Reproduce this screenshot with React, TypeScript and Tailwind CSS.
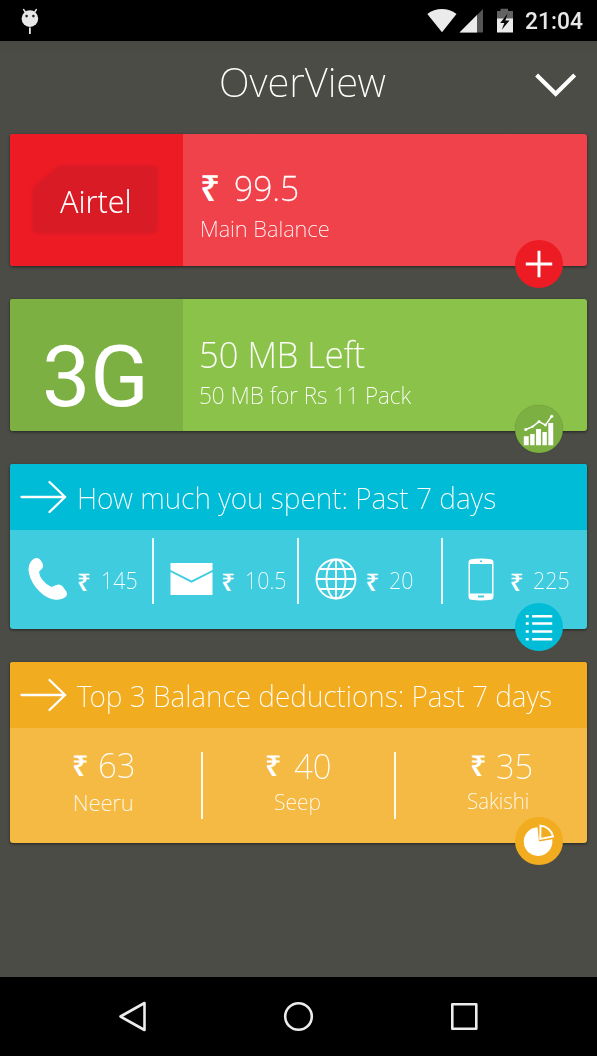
import type { ReactNode } from "react";

const thin = "block w-max origin-left whitespace-nowrap leading-none font-[240]";

function Rupee({ className }: { className: string }) {
  return (
    <span className={`block w-max origin-left whitespace-nowrap leading-none font-[620] ${className}`}>₹</span>
  );
}

function Badge({ className, children }: { className: string; children: ReactNode }) {
  return (
    <button
      className={`absolute right-6 bottom-[-22px] flex size-12 items-center justify-center rounded-full ${className}`}
    >
      <svg width="48" height="48" viewBox="0 0 49 49" fill="none">
        {children}
      </svg>
    </button>
  );
}

function LongArrow() {
  return (
    <svg width="48" height="34" viewBox="0 0 48 34" fill="none" stroke="white" strokeWidth="2.3" strokeLinecap="round">
      <path d="M2.5 17H46M30.5 2L46 17L30.5 32" />
    </svg>
  );
}

function StatusBar() {
  return (
    <div className="flex h-[41px] items-start bg-black">
      <svg className="mt-2 ml-5 shrink-0" width="20" height="28" viewBox="0 0 20 28">
        <path d="M3.6 1.5L6 5M16.4 1.5L14 5" stroke="#e8e8e8" strokeWidth="1.4" strokeLinecap="round" />
        <circle cx="9.9" cy="10.6" r="8.3" fill="#e8e8e8" />
        <circle cx="6.6" cy="8.1" r="1.3" fill="#222" />
        <circle cx="13.4" cy="8.1" r="1.3" fill="#222" />
        <path d="M9.9 19.5V26" stroke="#e8e8e8" strokeWidth="1.8" />
      </svg>
      <svg className="mt-2 ml-[387px] shrink-0" width="88" height="26" viewBox="0 0 88 26">
        <path d="M0.3 6.1C8.5 -0.7 21.3 -0.7 29.5 6.1L15 24.3Z" fill="#ebebeb" />
        <path d="M56 1V24.5H32.5Z" fill="#555" />
        <path d="M50 7V24.5H32.5Z" fill="#ebebeb" />
        <path d="M70 3H73.5V0.7H81V3H86V12H70Z" fill="#626262" />
        <path d="M70 10.5H86V24.5H70Z" fill="#ebebeb" />
        <path d="M80.7 5.5L73.2 15H77.3L74.8 21.8L82.5 12.4H78.4Z" fill="#0a0a0a" />
      </svg>
      <span className="mt-[10px] ml-[10px] block origin-left font-[Roboto] text-[23.5px] leading-none font-medium text-[#e8e8e8] scale-x-[0.97]">21:04</span>
    </div>
  );
}

function Header() {
  return (
    <header className="flex h-[93px] shrink-0 items-start">
      <h1 className={`${thin} mt-[20px] ml-[219px] scale-x-[0.98] text-[41px]`}>OverView</h1>
      <svg className="mt-8 ml-auto mr-5 shrink-0" width="43" height="26" viewBox="0 0 43 26" fill="none">
        <path d="M2.6 2L21.7 20.7L40.7 2" stroke="white" strokeWidth="4.2" />
      </svg>
    </header>
  );
}

const card = "relative flex shrink-0 rounded-[3px] shadow-[0_1px_3px_rgba(0,0,0,0.55)]";

function BalanceCard() {
  return (
    <section className={`${card} h-[132px] bg-[#f0424b]`}>
      <div className="flex w-[173px] items-center rounded-l-[3px] bg-[#ed1b24] pl-[21px]">
        <div className="relative flex h-[72px] w-[128px]">
          <svg className="absolute inset-0 blur-[1px]" width="128" height="72" viewBox="0 0 128 72">
            <path d="M31 1H120Q127 1 127 8V63Q127 70 120 70H8Q1 70 1 63V28Q1 24 4 21L26 3Q28 1 31 1Z" fill="#d91b26" />
          </svg>
          <span className="relative mt-[22px] ml-[29px] block h-max w-max origin-left text-[31px] leading-none font-[340] scale-x-[0.98]">Airtel</span>
        </div>
      </div>
      <div className="pl-[17px] pt-[36px]">
        <div className="flex h-[35px]">
          <Rupee className="w-[18px] text-[35px]" />
          <span className={`${thin} ml-[14px] scale-x-[0.96] text-[35px] [-webkit-text-stroke:0.3px_white]`}>99.5</span>
        </div>
        <span className={`${thin} mt-[13px] scale-x-[0.975] text-[22.5px]`}>Main Balance</span>
      </div>
      <Badge className="bg-[#ed1b24]">
        <path d="M24.5 11V38M11 24.5H38" stroke="white" strokeWidth="3" />
      </Badge>
    </section>
  );
}

function DataCard() {
  return (
    <section className={`${card} mt-[33px] h-[132px] bg-[#8bc34a]`}>
      <div className="flex w-[173px] rounded-l-[3px] bg-[#7cb043]">
        <span className="mt-[35px] ml-[32px] block h-max w-max font-[Roboto] text-[86px] leading-none">3G</span>
      </div>
      <div className="pl-[16px] pt-[38px]">
        <span className={`${thin} scale-x-[0.96] text-[36px] [-webkit-text-stroke:0.2px_white]`}>50 MB Left</span>
        <span className={`${thin} mt-[11px] scale-x-[0.981] text-[23px]`}>50 MB for Rs 11 Pack</span>
      </div>
      <Badge className="bg-[#7cb043] shadow-[0_0_1px_rgba(0,0,0,0.4)]">
        <path d="M9 41V32H14V41ZM15.5 41V29.5H20V41ZM21.5 41V24.5H26.5V41ZM28 41V27.5H32.5V41ZM34 41V18.5H39V41Z" fill="white" />
        <path d="M11 25L18 22L24.5 17L31 20.5L37.500 11.5" stroke="white" strokeWidth="1.5" />
        <g fill="white">
          <circle cx="11" cy="25" r="1.6" />
          <circle cx="18" cy="22" r="1.2" />
          <circle cx="24.5" cy="17" r="1.5" />
          <circle cx="31" cy="20.5" r="1.5" />
          <circle cx="37.5" cy="11.5" r="1.6" />
        </g>
      </Badge>
    </section>
  );
}

function Spend({ icon, amount }: { icon: ReactNode; amount: string }) {
  return (
    <div className="flex min-w-0 flex-1 items-start">
      <div className="mt-[27px] ml-[14px] flex h-[44px] w-[46px] shrink-0 items-center justify-center">{icon}</div>
      <Rupee className="mt-[40px] ml-[7px] w-[13px] shrink-0 text-[24px]" />
      <span className={`${thin} mt-[39px] ml-[10px] scale-x-[0.93] text-[23px]`}>{amount}</span>
    </div>
  );
}

function PhoneIcon() {
  return (
    <svg className="ml-[2px]" width="42" height="44" viewBox="0 0 42 44">
      <path
        d="M10.5 1.2Q7 0.5 3.8 4.8Q0.5 9.5 2 16.5Q4.3 26 12 34Q20 42 28.5 42.7Q35 43 38.7 39.7Q41 37.5 39.2 34.3L35.5 29.3Q33 26.5 29.2 28L24.5 30Q19.5 28 15.5 23Q12.2 19 12 14.8L15.4 11.2Q17 9.2 15.5 6.2L13.5 3Q12.5 1.4 10.5 1.2Z"
        fill="white"
      />
    </svg>
  );
}

function MailIcon() {
  return (
    <svg width="43" height="32" viewBox="0 0 43 32">
      <path d="M0.5 0H42.5V7L21.5 17.5L0.5 7Z" fill="white" />
      <path d="M0.5 9L21.5 19.7L42.5 9V32H0.5Z" fill="white" />
    </svg>
  );
}

function GlobeIcon() {
  return (
    <svg width="42" height="42" viewBox="0 0 42 42" fill="none" stroke="white" strokeWidth="1.8">
      <circle cx="21" cy="21" r="19.5" />
      <ellipse cx="21" cy="21" rx="9.5" ry="19.5" />
      <path d="M21 1.5V40.5M1.5 21H40.5M4.5 11H37.5M4.5 31H37.5" />
    </svg>
  );
}

function MobileIcon() {
  return (
    <svg className="ml-[2px]" width="26" height="43" viewBox="0 0 26 43">
      <path
        fillRule="evenodd"
        d="M3 1.2Q13 -0.2 23 1.2Q25.500 1.6 25.5 4V39Q25.5 41.4 23 41.8Q13 43 3 41.8Q0.5 41.4 0.5 39V4Q0.5 1.6 3 1.2ZM2 6V35.5H24V6ZM12 2.5H14V4H12ZM10 37.5V39.5H16V37.5Z"
        fill="white"
      />
    </svg>
  );
}

function SpentCard() {
  const line = <div className="mt-2 h-[66px] w-0.5 shrink-0 bg-[#e9fafc]" />;
  return (
    <section className={`${card} mt-[33px] h-[165px] flex-col bg-[#40ccdf]`}>
      <div className="flex h-[66px] rounded-t-[3px] bg-[#00bcd7] pt-4 pl-[9px]">
        <LongArrow />
        <h2 className={`${thin} mt-[3px] ml-[10px] scale-x-[0.972] text-[29px]`}>How much you spent: Past 7 days</h2>
      </div>
      <div className="flex h-[99px] items-start pr-[2px]">
        <Spend icon={<PhoneIcon />} amount="145" />
        {line}
        <Spend icon={<MailIcon />} amount="10.5" />
        {line}
        <Spend icon={<GlobeIcon />} amount="20" />
        {line}
        <Spend icon={<MobileIcon />} amount="225" />
      </div>
      <Badge className="bg-[#00bcd7]">
        <path d="M17.5 13.5H38M17.5 21H38M17.5 29H38M17.5 37H38M11 13.5H14M11 21H14M11 29H14M11 37H14" stroke="white" strokeWidth="2.6" />
      </Badge>
    </section>
  );
}

function DeductionsCard() {
  const line = <div className="mt-6 h-[67px] w-0.5 shrink-0 bg-[#fffbe8]" />;
  return (
    <section className={`${card} mt-[33px] h-[181px] flex-col bg-[#f4ba43]`}>
      <div className="flex h-[66px] rounded-t-[3px] bg-[#f2ac1f] pt-4 pl-[9px]">
        <LongArrow />
        <h2 className={`${thin} mt-[3px] ml-[10px] scale-x-[0.97] text-[29px]`}>Top 3 Balance deductions: Past 7 days</h2>
      </div>
      <div className="flex h-[115px] items-start">
        <div className="w-[191px] pt-[19px] pl-[62px]">
          <div className="flex h-[35px]">
            <Rupee className="mt-[3px] w-[16px] text-[29px]" />
            <span className={`${thin} ml-[9px] scale-x-[0.94] text-[35px]`}>63</span>
          </div>
          <span className={`${thin} mt-[9px] ml-[1px] text-[22px]`}>Neeru</span>
        </div>
        {line}
        <div className="w-[191px] pt-[20px] pl-[62px]">
          <div className="flex h-[35px]">
            <Rupee className="mt-[2px] w-[16px] text-[29px]" />
            <span className={`${thin} ml-[12px] scale-x-[0.94] text-[35px]`}>40</span>
          </div>
          <span className={`${thin} mt-[7px] ml-[9px] scale-x-[0.96] text-[22px]`}>Seep</span>
        </div>
        {line}
        <div className="pt-[20px] pl-[74px]">
          <div className="flex h-[35px]">
            <Rupee className="mt-[2px] w-[16px] text-[29px]" />
            <span className={`${thin} ml-[9px] scale-x-[0.93] text-[35px]`}>35</span>
          </div>
          <span className={`${thin} mt-[6px] -ml-[3px] scale-x-[0.94] text-[22px]`}>Sakishi</span>
        </div>
      </div>
      <Badge className="bg-[#f2ac1f]">
        <path d="M23 10.5L24.5 25L38 22.8A14.6 14.6 0 1 1 23 10.5Z" fill="white" />
        <path d="M26 8.8A14 14 0 0 1 38.8 19.8L25.8 22.3Z" stroke="white" strokeWidth="2" />
      </Badge>
    </section>
  );
}

function NavBar() {
  return (
    <nav className="flex h-[79px] bg-black">
      <svg width="597" height="79" viewBox="0 0 597 79" fill="none" stroke="#ececec" strokeWidth="2.6" strokeLinejoin="round">
        <path d="M120.5 39.5L144.5 26V53Z" />
        <circle cx="298.5" cy="39.5" r="13.3" />
        <rect x="452.3" y="27.3" width="24" height="24.5" />
      </svg>
    </nav>
  );
}

export default function App() {
  return (
    <div className="flex h-[1056px] w-[597px] flex-col overflow-hidden bg-[#4c4c46] font-['Noto_Sans',sans-serif] text-white">
      <StatusBar />
      <div className="flex h-[936px] flex-col bg-linear-to-b from-[#484943] to-[#4c4c46] to-2%">
        <Header />
        <main className="flex flex-col pr-[10px] pl-[10px]">
          <BalanceCard />
          <DataCard />
          <SpentCard />
          <DeductionsCard />
        </main>
      </div>
      <NavBar />
    </div>
  );
}
